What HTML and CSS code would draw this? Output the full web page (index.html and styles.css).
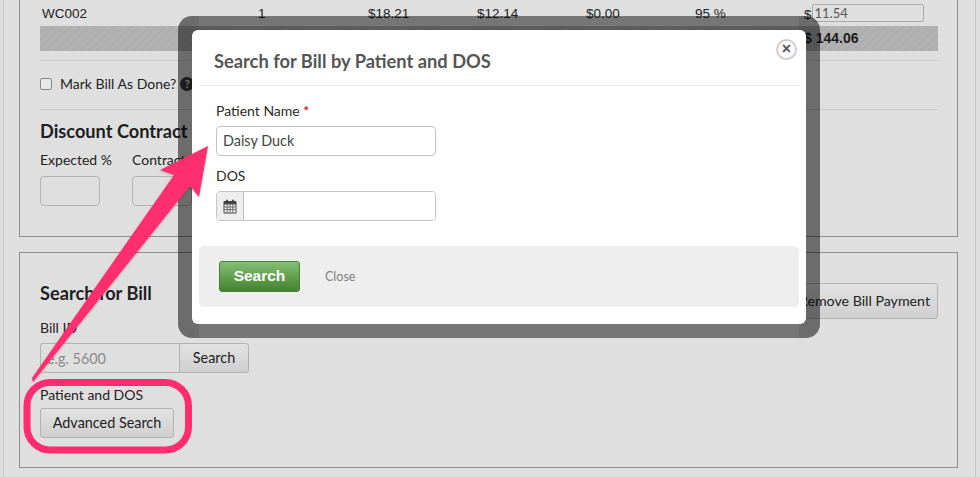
FILE: index.html
```html
<!DOCTYPE html>
<html lang="en">
<head>
  <meta charset="UTF-8" />
  <meta name="viewport" content="width=device-width, initial-scale=1.0"/>
  <title>Search for Bill by Patient and DOS</title>
  <link rel="stylesheet" href="styles.css">
</head>
<body>
<div class="page">
  <section class="panel panel-top">
    <table class="bill-table">
      <tbody>
        <tr>
          <td class="col-code">WC002</td>
          <td class="col-qty">1</td>
          <td class="col-money">$18.21</td>
          <td class="col-money">$12.14</td>
          <td class="col-money">$0.00</td>
          <td class="col-pct">95 %</td>
          <td class="col-pay">$<input class="pay-input" type="text" value="11.54"></td>
        </tr>
        <tr class="total-row">
          <td colspan="6"></td>
          <td class="total-cell">$ 144.06</td>
        </tr>
      </tbody>
    </table>
    <div class="done-row">
      <input class="done-check" type="checkbox">
      <span>Mark Bill As Done?</span>
      <span class="help-icon">?</span>
    </div>
    <h3 class="section-title">Discount Contract</h3>
    <div class="contract-fields">
      <div class="contract-field">
        <label>Expected %</label>
        <input class="small-input" type="text">
      </div>
      <div class="contract-field">
        <label>Contract</label>
        <input class="small-input" type="text">
      </div>
    </div>
  </section>

  <section class="panel panel-search">
    <div class="search-head">
      <h3 class="section-title">Search for Bill</h3>
      <button class="btn btn-remove">Remove Bill Payment</button>
    </div>
    <label class="field-label">Bill ID</label>
    <div class="input-group">
      <input class="bill-input" type="text" placeholder="e.g. 5600">
      <button class="btn btn-joined">Search</button>
    </div>
    <label class="field-label patient-label">Patient and DOS</label>
    <button class="btn btn-advanced">Advanced Search</button>
  </section>
</div>

<div class="modal-shade"></div>
<div class="modal">
  <div class="modal-head">
    <h2>Search for Bill by Patient and DOS</h2>
    <span class="modal-close">&times;</span>
  </div>
  <div class="modal-body">
    <label class="modal-label">Patient Name <span class="req">*</span></label>
    <input class="modal-input" type="text" value="Daisy Duck">
    <label class="modal-label dos-label">DOS</label>
    <div class="date-group">
      <span class="date-addon">
        <svg width="14" height="15" viewBox="0 0 14 15">
          <rect x="0.5" y="2" width="13" height="12.5" rx="1" fill="#444"/>
          <rect x="3" y="0.5" width="2" height="3" rx="1" fill="#444"/>
          <rect x="9" y="0.5" width="2" height="3" rx="1" fill="#444"/>
          <path d="M1.5 5.5h11v8h-11z" fill="#eee"/>
          <path d="M1.5 8h11M1.5 10.5h11M4.2 5.5v8M7 5.5v8M9.8 5.5v8" stroke="#555" stroke-width="0.8" fill="none"/>
        </svg>
      </span>
      <input class="date-input" type="text">
    </div>
  </div>
  <div class="modal-foot">
    <button class="btn-green">Search</button>
    <a class="close-link">Close</a>
  </div>
</div>

<svg class="annotation" width="980" height="477" viewBox="0 0 980 477">
  <defs>
    <filter id="arrowShadow" x="-10%" y="-10%" width="120%" height="120%">
      <feDropShadow dx="0" dy="1" stdDeviation="1.2" flood-color="#000" flood-opacity="0.25"/>
    </filter>
  </defs>
  <rect x="27" y="382.5" width="161.500" height="67.500" rx="23" fill="none" stroke="#ff2d6f" stroke-width="7"/>
  <polygon points="208,146 160,170 174,175 32,378 33,382 190,186 199,197" fill="#ff2d6f" filter="url(#arrowShadow)"/>
</svg>
</body>
</html>
```
FILE: styles.css
```css
* {
  box-sizing: border-box;
}
html, body {
  margin: 0;
  height: 477px;
  overflow: hidden;
}
body {
  background: #dfdfdf;
  font-family: Lato, "Liberation Sans", sans-serif;
  font-size: 14px;
  color: #222;
}
button, input {
  font-family: inherit;
}

.page {
  width: 973px;
  height: 477px;
  margin-left: 3px;
  padding: 0 15px;
  border-left: 1px solid #c6c6c6;
  border-right: 1px solid #c6c6c6;
}
.panel {
  width: 939px;
  border: 1px solid #8f8f8f;
  padding-left: 20px;
  padding-right: 19px;
}
.panel-top {
  height: 237px;
  border-top: 0;
}
.panel-search {
  height: 216px;
  margin-top: 15px;
  padding-top: 30px;
}

/* bill table */
.bill-table {
  width: 898px;
  border-collapse: collapse;
  table-layout: fixed;
  font-family: "Liberation Sans", sans-serif;
  font-size: 13.500px;
}
.bill-table td {
  padding: 0;
}
.bill-table tr:first-child td {
  height: 26px;
}
.col-code {
  width: 218px;
  padding-left: 2px !important;
}
.col-qty {
  width: 110px;
}
.col-money {
  width: 109px;
}
.col-pct {
  width: 109px;
}
.pay-input {
  width: 112px;
  height: 18px;
  margin-left: 0;
  padding: 0 2px;
  border: 1px solid #aaa;
  border-radius: 2px;
  background: transparent;
  font-family: Lato, sans-serif;
  font-size: 13px;
  color: #555;
  vertical-align: 1px;
}
.total-row td {
  height: 25px;
  background: repeating-linear-gradient(135deg, #b2b2b2 0 3px, #aeaeae 3px 6px);
}
.total-cell {
  font-weight: bold;
  font-size: 14px;
  color: #1c1c1c;
  padding-bottom: 2px !important;
}

.done-row {
  display: flex;
  align-items: center;
  height: 50px;
  margin-top: 9px;
  padding-bottom: 3px;
  border-top: 1px solid #c8c8c8;
  border-bottom: 1px solid #c8c8c8;
}
.done-check {
  width: 12px;
  height: 12px;
  margin: 0 8px 0 0;
  appearance: none;
  border: 1px solid #8a8a8a;
  border-radius: 2px;
  background: #e8e8e8;
}
.help-icon {
  width: 14px;
  height: 14px;
  margin-left: 4px;
  border-radius: 50%;
  background: #3a3a3a;
  color: #dfdfdf;
  font-size: 12px;
  font-weight: bold;
  line-height: 14px;
  text-align: center;
}
.section-title {
  margin: 0;
  font-size: 18.200px;
  font-weight: 700;
  color: #1e1e1e;
  line-height: 22px;
}
.panel-top .section-title {
  margin-top: 10px;
}
.contract-fields {
  display: flex;
  margin-top: 8px;
}
.contract-field {
  width: 92px;
}
.contract-field label {
  display: block;
  line-height: 20px;
  margin-bottom: 6px;
}
.small-input {
  display: block;
  width: 60px;
  height: 30px;
  border: 1px solid #b3b3b3;
  border-radius: 4px;
  background: transparent;
}

/* search panel */
.search-head {
  display: flex;
  justify-content: space-between;
  align-items: flex-start;
  height: 36px;
}
.search-head .section-title {
  margin-top: -1px;
}
.btn {
  border: 1px solid #b2b2b2;
  border-radius: 3px;
  background: linear-gradient(#e2e2e2, #cfcfcf);
  font-size: 14.400px;
  color: #222;
  padding: 0 0 2px;
}
.btn-remove {
  width: 148px;
  height: 36px;
  text-align: right;
  padding-right: 7px;
  font-size: 14.200px;
  white-space: nowrap;
}
.field-label {
  display: block;
  line-height: 20px;
}
.search-head + .field-label {
  margin-top: -1px;
}
.input-group {
  display: flex;
  margin-top: 5px;
  width: 209px;
  height: 30px;
}
.bill-input {
  width: 139px;
  border: 1px solid #b3b3b3;
  border-right: 0;
  border-radius: 3px 0 0 3px;
  background: transparent;
  padding: 0 6px;
  font-size: 14.400px;
}
.bill-input::placeholder {
  color: #8a8a8a;
}
.btn-joined {
  flex: 1;
  border-radius: 0 3px 3px 0;
}
.patient-label {
  margin-top: 12px;
}
.btn-advanced {
  display: block;
  width: 134px;
  height: 30px;
  margin-top: 3px;
}

/* modal */
.modal-shade {
  position: absolute;
  left: 178px;
  top: 16px;
  width: 642px;
  height: 322px;
  border-radius: 14px;
  background:
    linear-gradient(rgba(0, 0, 0, 0.08), rgba(0, 0, 0, 0.08)) left / 21px 100% no-repeat,
    linear-gradient(rgba(0, 0, 0, 0.08), rgba(0, 0, 0, 0.08)) right / 21px 100% no-repeat,
    rgba(0, 0, 0, 0.47);
}
.modal {
  position: absolute;
  left: 192px;
  top: 30px;
  width: 614px;
  height: 294px;
  border-radius: 6px;
  background: #fff;
  color: #2a2a2a;
}
.modal-head {
  display: flex;
  align-items: center;
  height: 56px;
  margin: 0 7px;
  padding: 6px 0 0 15px;
  border-bottom: 1px solid #ececec;
}
.modal-head h2 {
  margin: 0;
  font-size: 18.300px;
  font-weight: 700;
  color: #555;
}
.modal-close {
  position: absolute;
  right: 9px;
  top: 9px;
  width: 21px;
  height: 21px;
  border: 2px solid #cfcfcf;
  border-radius: 50%;
  color: #555;
  font-family: "Liberation Sans", sans-serif;
  font-size: 16px;
  font-weight: bold;
  line-height: 16px;
  text-align: center;
}
.modal-body {
  padding: 15px 0 0 24px;
}
.modal-label {
  display: block;
  line-height: 20px;
}
.req {
  color: #d22;
  font-weight: bold;
}
.modal-input {
  display: block;
  width: 220px;
  height: 30px;
  margin-top: 5px;
  padding: 0 6px 2px;
  border: 1px solid #c4c4c4;
  border-radius: 4px;
  font-size: 14.400px;
  color: #444;
}
.dos-label {
  margin-top: 10px;
}
.date-group {
  display: flex;
  width: 220px;
  height: 30px;
  margin-top: 5px;
  border: 1px solid #c4c4c4;
  border-radius: 4px;
  overflow: hidden;
}
.date-addon {
  display: flex;
  align-items: center;
  justify-content: center;
  width: 27px;
  background: #eee;
  border-right: 1px solid #c4c4c4;
}
.date-input {
  flex: 1;
  min-width: 0;
  border: 0;
}
.modal-foot {
  display: flex;
  align-items: center;
  width: 600px;
  height: 61px;
  margin: 25px 7px 0;
  padding-left: 20px;
  border-radius: 5px;
  background: #eee;
}
.btn-green {
  width: 81px;
  height: 31px;
  padding: 0 0 2px;
  border: 1px solid #4a7d3a;
  border-radius: 3px;
  background: linear-gradient(#83bf72, #44822f);
  color: #fff;
  font-family: "Liberation Sans", sans-serif;
  font-size: 15.500px;
  font-weight: bold;
}
.close-link {
  margin-left: 25px;
  font-size: 12.500px;
  color: #808080;
}
.annotation {
  position: absolute;
  left: 0;
  top: 0;
}
```
